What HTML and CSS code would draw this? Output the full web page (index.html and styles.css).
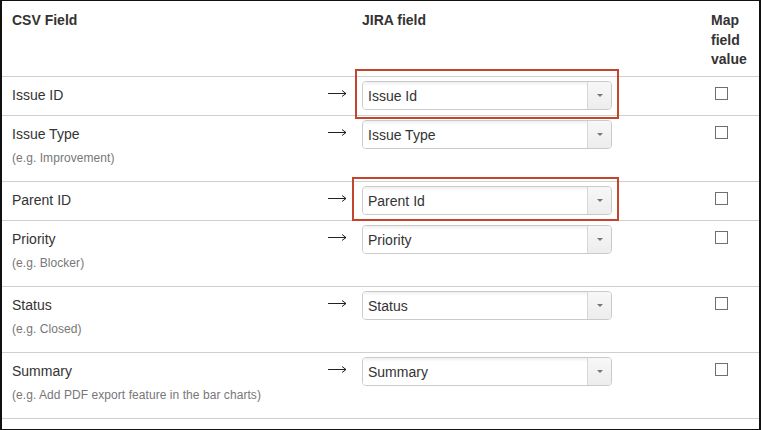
FILE: index.html
```html
<!DOCTYPE html>
<html lang="en">
<head>
<meta charset="utf-8">
<title>CSV field mapping</title>
<link rel="stylesheet" href="styles.css">
</head>
<body>
<div class="frame">
  <div class="row head">
    <div class="cell-field">CSV Field</div>
    <div class="cell-arrow"></div>
    <div class="cell-jira">JIRA field</div>
    <div class="cell-map">Map field value</div>
  </div>

  <div class="row">
    <div class="cell-field">Issue ID</div>
    <div class="cell-arrow"><svg class="arrow" width="19" height="9" viewBox="0 0 19 9"><path d="M0 4.5H18M14 1.5L18 4.5L14 7.5" fill="none" stroke="#222" stroke-width="1"/></svg></div>
    <div class="cell-select">
      <div class="select"><span class="select-value">Issue Id</span><span class="select-btn"><i class="caret"></i></span><span class="mark mark-a"></span></div>
    </div>
    <div class="cell-check"><span class="checkbox"></span></div>
  </div>

  <div class="row tall">
    <div class="cell-field">Issue Type<div class="hint">(e.g. Improvement)</div></div>
    <div class="cell-arrow"><svg class="arrow" width="19" height="9" viewBox="0 0 19 9"><path d="M0 4.5H18M14 1.5L18 4.5L14 7.5" fill="none" stroke="#222" stroke-width="1"/></svg></div>
    <div class="cell-select">
      <div class="select"><span class="select-value">Issue Type</span><span class="select-btn"><i class="caret"></i></span></div>
    </div>
    <div class="cell-check"><span class="checkbox"></span></div>
  </div>

  <div class="row">
    <div class="cell-field">Parent ID</div>
    <div class="cell-arrow"><svg class="arrow" width="19" height="9" viewBox="0 0 19 9"><path d="M0 4.5H18M14 1.5L18 4.5L14 7.5" fill="none" stroke="#222" stroke-width="1"/></svg></div>
    <div class="cell-select">
      <div class="select"><span class="select-value">Parent Id</span><span class="select-btn"><i class="caret"></i></span><span class="mark mark-b"></span></div>
    </div>
    <div class="cell-check"><span class="checkbox"></span></div>
  </div>

  <div class="row tall">
    <div class="cell-field">Priority<div class="hint">(e.g. Blocker)</div></div>
    <div class="cell-arrow"><svg class="arrow" width="19" height="9" viewBox="0 0 19 9"><path d="M0 4.5H18M14 1.5L18 4.5L14 7.5" fill="none" stroke="#222" stroke-width="1"/></svg></div>
    <div class="cell-select">
      <div class="select"><span class="select-value">Priority</span><span class="select-btn"><i class="caret"></i></span></div>
    </div>
    <div class="cell-check"><span class="checkbox"></span></div>
  </div>

  <div class="row tall">
    <div class="cell-field">Status<div class="hint">(e.g. Closed)</div></div>
    <div class="cell-arrow"><svg class="arrow" width="19" height="9" viewBox="0 0 19 9"><path d="M0 4.5H18M14 1.5L18 4.5L14 7.5" fill="none" stroke="#222" stroke-width="1"/></svg></div>
    <div class="cell-select">
      <div class="select"><span class="select-value">Status</span><span class="select-btn"><i class="caret"></i></span></div>
    </div>
    <div class="cell-check"><span class="checkbox"></span></div>
  </div>

  <div class="row tall">
    <div class="cell-field">Summary<div class="hint">(e.g. Add PDF export feature in the bar charts)</div></div>
    <div class="cell-arrow"><svg class="arrow" width="19" height="9" viewBox="0 0 19 9"><path d="M0 4.5H18M14 1.5L18 4.5L14 7.5" fill="none" stroke="#222" stroke-width="1"/></svg></div>
    <div class="cell-select">
      <div class="select"><span class="select-value">Summary</span><span class="select-btn"><i class="caret"></i></span></div>
    </div>
    <div class="cell-check"><span class="checkbox"></span></div>
  </div>
</div>
</body>
</html>
```
FILE: styles.css
```css
html, body {
  margin: 0;
  padding: 0;
  background: #fff;
}

body {
  font-family: "Liberation Sans", Arial, sans-serif;
  color: #333;
}

.frame {
  width: 761px;
  height: 430px;
  box-sizing: border-box;
  border-style: solid;
  border-color: #111;
  border-width: 1px 2px 1px 2px;
  overflow: hidden;
}

.row {
  display: grid;
  grid-template-columns: 326px 34px 349px 48px;
  height: 39px;
  box-sizing: border-box;
  border-bottom: 1px solid #cfcfcf;
}

.row.tall {
  height: 66px;
}

.row.head {
  height: 76px;
  font-weight: bold;
  font-size: 14px;
  line-height: 19.5px;
}

.head > div {
  padding-top: 10px;
}

.head .cell-field {
  padding-top: 10px;
  line-height: 19.5px;
}

.cell-field {
  padding: 8px 0 0 10px;
  font-size: 14px;
  line-height: 20px;
}

.hint {
  font-size: 12px;
  line-height: 18px;
  color: #777;
  margin-top: 5px;
  letter-spacing: 0.06px;
}

.cell-arrow {
  padding-top: 12px;
}

.arrow {
  display: block;
}

.cell-select {
  padding-top: 4px;
}

.select {
  position: relative;
  display: flex;
  width: 250px;
  height: 29px;
  box-sizing: border-box;
  border: 1px solid #cacaca;
  border-radius: 4px;
  background: #fff;
}

.select-value {
  flex: 1;
  padding: 1px 0 0 5px;
  font-size: 14px;
  line-height: 26px;
  color: #333;
  border-radius: 3px 0 0 3px;
  background: linear-gradient(#efefef, #fff 4px);
}

.select-btn {
  width: 23px;
  display: flex;
  align-items: center;
  justify-content: center;
  border-left: 1px solid #d6d6d6;
  border-radius: 0 3px 3px 0;
  background: linear-gradient(#f7f7f7, #ededed);
}

.caret {
  width: 0;
  height: 0;
  border-left: 3.5px solid transparent;
  border-right: 3.5px solid transparent;
  border-top: 3px solid #777;
}

.mark {
  position: absolute;
  box-sizing: border-box;
  border: 2px solid #c2452c;
  pointer-events: none;
}

.mark-a {
  left: -8px;
  top: -13px;
  width: 264px;
  height: 50px;
}

.mark-b {
  left: -11px;
  top: -10px;
  width: 267px;
  height: 44px;
}

.cell-check {
  padding: 10px 0 0 4px;
}

.checkbox {
  display: block;
  width: 13px;
  height: 13px;
  box-sizing: border-box;
  border: 1px solid #6f6f6f;
  background: #fff;
}
```
